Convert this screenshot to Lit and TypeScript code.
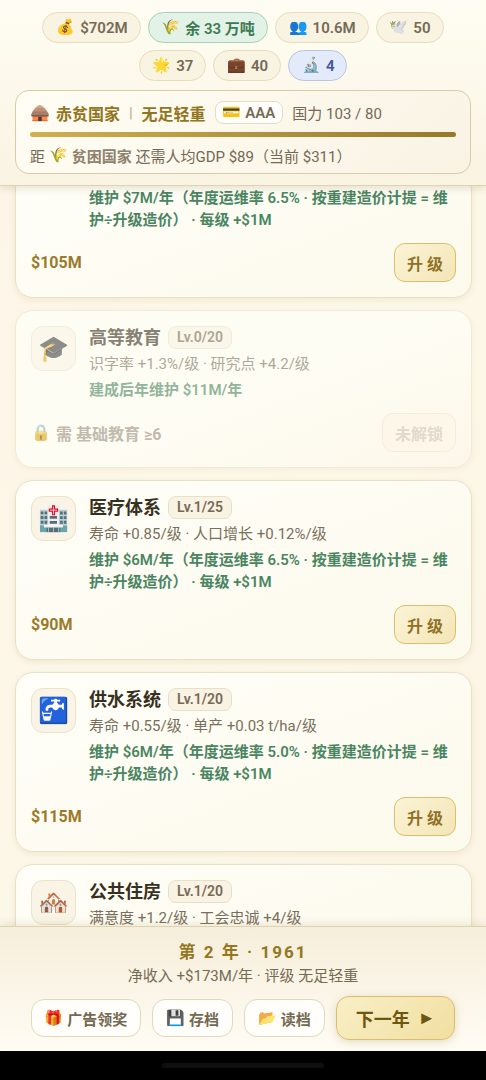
import { LitElement, html, css, nothing } from "lit";
import { customElement, property } from "lit/decorators.js";

interface Project {
  icon?: string;
  name?: string;
  level?: string;
  effect?: string;
  upkeep: string;
  cost?: string;
  need?: string;
}

const STATS = [
  { icon: "💰", text: "$702M", tone: "" },
  { icon: "🌾", text: "余 33 万吨", tone: "green" },
  { icon: "👥", text: "10.6M", tone: "" },
  { icon: "🕊️", text: "50", tone: "" },
  { icon: "🌟", text: "37", tone: "" },
  { icon: "💼", text: "40", tone: "" },
  { icon: "🔬", text: "4", tone: "blue" },
];

const PROJECTS: Project[] = [
  {
    upkeep: "维护 $7M/年（年度运维率 6.5% · 按重建造价计提 = 维护÷升级造价） · 每级 +$1M",
    cost: "$105M",
  },
  {
    icon: "🎓",
    name: "高等教育",
    level: "Lv.0/20",
    effect: "识字率 +1.3%/级 · 研究点 +4.2/级",
    upkeep: "建成后年维护 $11M/年",
    need: "需 基础教育 ≥6",
  },
  {
    icon: "🏥",
    name: "医疗体系",
    level: "Lv.1/25",
    effect: "寿命 +0.85/级 · 人口增长 +0.12%/级",
    upkeep: "维护 $6M/年（年度运维率 6.5% · 按重建造价计提 = 维护÷升级造价） · 每级 +$1M",
    cost: "$90M",
  },
  {
    icon: "🚰",
    name: "供水系统",
    level: "Lv.1/20",
    effect: "寿命 +0.55/级 · 单产 +0.03 t/ha/级",
    upkeep: "维护 $6M/年（年度运维率 5.0% · 按重建造价计提 = 维护÷升级造价） · 每级 +$1M",
    cost: "$115M",
  },
  {
    icon: "🏘️",
    name: "公共住房",
    level: "Lv.1/20",
    effect: "满意度 +1.2/级 · 工会忠诚 +4/级",
    upkeep: "",
  },
];

@customElement("app-icon")
export class AppIcon extends LitElement {
  @property() name = "";
  static styles = css`
    :host {
      display: inline-block;
      line-height: 1;
      font-family: "Noto Color Emoji", sans-serif;
    }
  `;
  render() {
    return html`${this.name}`;
  }
}

@customElement("project-card")
export class ProjectCard extends LitElement {
  @property({ attribute: false }) project!: Project;

  static styles = css`
    :host {
      display: block;
    }
    .card {
      display: flex;
      flex-direction: column;
      gap: 12px;
      padding: 15px;
      border: 1px solid #e9e0c6;
      border-radius: 18px;
      background: linear-gradient(160deg, #fffef8, #fcfaec);
      box-shadow: 0 2px 6px rgba(150, 120, 50, 0.12);
    }
    .locked {
      background: linear-gradient(160deg, #fefdf4 50%, #fdf7ea);
      border-color: #f1ead6;
      box-shadow: 0 2px 6px rgba(150, 120, 50, 0.07);
    }
    .info {
      display: grid;
      grid-template-columns: 45px 1fr;
      column-gap: 13px;
    }
    .tile {
      display: grid;
      place-items: center;
      box-sizing: border-box;
      width: 45px;
      height: 45px;
      border: 1px solid #ece2cb;
      border-radius: 12px;
      background: #faf4e6;
      font-size: 25px;
    }
    .text {
      grid-column: 2;
      display: flex;
      flex-direction: column;
      gap: 4px;
    }
    .title {
      display: flex;
      align-items: center;
      gap: 7px;
    }
    h2 {
      margin: 0;
      font-size: 18px;
      line-height: 23px;
      font-weight: 700;
      color: #37301f;
    }
    .level {
      box-sizing: border-box;
      height: 23px;
      padding: 0 8px;
      border: 1px solid #e9e0c8;
      border-radius: 8px;
      background: #f9f3e4;
      font-size: 14px;
      line-height: 21px;
      font-weight: 600;
      color: #756a55;
    }
    p {
      margin: 0;
      font-size: 15px;
      line-height: 22px;
      color: #7a6f5c;
    }
    .upkeep {
      color: #4a8562;
      font-weight: 600;
    }
    .foot {
      display: flex;
      align-items: center;
      justify-content: space-between;
      font-size: 16px;
      font-weight: 700;
      color: #9a7b2c;
    }
    button {
      box-sizing: border-box;
      height: 39px;
      padding: 0 12px;
      border: 1px solid #d9bf6c;
      border-radius: 11px;
      background: linear-gradient(135deg, #fbf3d6, #f3e6b6);
      font: inherit;
      color: #8f7128;
    }
    .need {
      display: flex;
      align-items: center;
      gap: 5px;
    }
    .locked .tile,
    .locked h2,
    .locked .level,
    .locked p,
    .locked .need {
      opacity: 0.6;
    }
    .locked .need {
      color: #9a9080;
    }
    .locked button {
      border-color: #f5ecdd;
      background: #fdf7ea;
      color: #e2dacb;
    }
  `;

  render() {
    const p = this.project;
    return html`
      <article class="card ${p.need ? "locked" : ""}">
        <div class="info">
          ${p.icon ? html`<div class="tile"><app-icon name=${p.icon}></app-icon></div>` : nothing}
          <div class="text">
            ${p.name
              ? html`<div class="title"><h2>${p.name}</h2><span class="level">${p.level}</span></div>
                  <p>${p.effect}</p>`
              : nothing}
            ${p.upkeep ? html`<p class="upkeep">${p.upkeep}</p>` : nothing}
          </div>
        </div>
        ${p.need
          ? html`<div class="foot">
              <span class="need"><app-icon name="🔒"></app-icon>${p.need}</span>
              <button disabled>未解锁</button>
            </div>`
          : p.cost
            ? html`<div class="foot"><span>${p.cost}</span><button>升 级</button></div>`
            : nothing}
      </article>
    `;
  }
}

@customElement("app-root")
export class AppRoot extends LitElement {
  static styles = css`
    :host {
      display: flex;
      flex-direction: column;
      height: 100vh;
      overflow: hidden;
      background: linear-gradient(120deg, #fef4e7, #fcf8e8 50%, #fdf4e5);
      font-family: Roboto, "Noto Sans CJK SC", sans-serif;
      color: #756a55;
    }
    header {
      position: relative;
      z-index: 1;
      display: flex;
      flex-direction: column;
      gap: 9px;
      padding: 12px 15px 11px;
      border-bottom: 1px solid #dfd3b4;
      background: linear-gradient(#fffdf3, #f9f3e2);
      box-shadow: 0 2px 8px rgba(130, 105, 45, 0.2);
    }
    .stats {
      display: flex;
      flex-wrap: wrap;
      justify-content: center;
      gap: 7px;
      margin: 0;
      padding: 0;
      list-style: none;
    }
    .stat {
      display: flex;
      align-items: center;
      gap: 5px;
      box-sizing: border-box;
      height: 31px;
      padding: 0 12px 0 13px;
      border: 1px solid #e8dcbd;
      border-radius: 16px;
      background: #f9f3e2;
      font-size: 15px;
      font-weight: 600;
    }
    .green {
      border-color: #a9d0b8;
      background: #e2f2e6;
      color: #3f7a55;
    }
    .blue {
      border-color: #b9c4e0;
      background: #e3eafa;
      color: #3f55a0;
    }
    .rank {
      display: flex;
      flex-direction: column;
      gap: 8px;
      padding: 10px 14px 8px;
      border: 1px solid #d8cca8;
      border-radius: 14px;
      background: linear-gradient(135deg, #fffdf4, #f9f3e4);
      font-size: 15px;
    }
    .line {
      display: flex;
      align-items: center;
      gap: 9px;
      height: 23px;
    }
    .goal {
      gap: 4px;
      height: 20px;
    }
    .goal b {
      color: #8d826d;
    }
    .nation {
      display: flex;
      align-items: center;
      gap: 6px;
      font-size: 16px;
      font-weight: 700;
      color: #927521;
    }
    .bar {
      color: #b5a988;
    }
    .rating {
      display: flex;
      align-items: center;
      gap: 4px;
      box-sizing: border-box;
      height: 23px;
      padding: 0 7px;
      border: 1px solid #e6dcc2;
      border-radius: 8px;
      background: #fffefa;
      font-weight: 600;
    }
    .meter {
      height: 5px;
      border-radius: 3px;
      background: linear-gradient(90deg, #d0b050, #96792c);
    }
    main {
      flex: 1;
      min-height: 0;
      overflow: hidden;
    }
    .list {
      display: flex;
      flex-direction: column;
      gap: 12px;
      margin-top: -15px;
      padding: 0 14px 0 15px;
    }
    footer {
      position: relative;
      z-index: 1;
      padding: 13px 16px 11px;
      border-top: 1px solid #dfd3b0;
      background: linear-gradient(#f6eedb, #fffcf4);
      box-shadow: 0 -2px 8px rgba(130, 105, 45, 0.15);
      text-align: center;
    }
    h1 {
      margin: 0;
      font-size: 17px;
      line-height: 24px;
      font-weight: 700;
      letter-spacing: 2px;
      color: #94771f;
    }
    .sum {
      margin: 0 0 8px;
      font-size: 15px;
      line-height: 24px;
    }
    .actions {
      display: flex;
      justify-content: center;
      align-items: center;
      gap: 11px;
    }
    button {
      display: flex;
      align-items: center;
      justify-content: center;
      gap: 4px;
      box-sizing: border-box;
      height: 38px;
      padding: 0 13px;
      border: 1px solid #e2d8bd;
      border-radius: 13px;
      background: #fffefa;
      font: inherit;
      font-size: 15px;
      font-weight: 600;
      color: #746952;
    }
    .next {
      height: 44px;
      padding: 0 19px;
      gap: 8px;
      border-color: #d6bf70;
      background: linear-gradient(135deg, #f8efc6, #f2dfa0);
      box-shadow: 0 2px 8px rgba(160, 130, 50, 0.25);
      font-size: 18px;
      font-weight: 700;
      color: #6d5512;
    }
    .system {
      display: grid;
      place-items: center;
      height: 29px;
      background: #000;
    }
    .handle {
      width: 33.3%;
      height: 5px;
      border-radius: 3px;
      background: #0f0f0f;
    }
  `;

  render() {
    return html`
      <header>
        <ul class="stats">
          ${STATS.map(
            (s) => html`<li class="stat ${s.tone}"><app-icon name=${s.icon}></app-icon>${s.text}</li>`
          )}
        </ul>
        <section class="rank">
          <div class="line">
            <span class="nation"><app-icon name="🛖"></app-icon>赤贫国家</span>
            <span class="bar">|</span>
            <span class="nation">无足轻重</span>
            <span class="rating"><app-icon name="💳"></app-icon>AAA</span>
            <span>国力 103 / 80</span>
          </div>
          <div class="meter"></div>
          <div class="line goal">
            <span>距</span><app-icon name="🌾"></app-icon>
            <span><b>贫困国家</b> 还需人均GDP $89（当前 $311）</span>
          </div>
        </section>
      </header>
      <main>
        <div class="list">
          ${PROJECTS.map((p) => html`<project-card .project=${p}></project-card>`)}
        </div>
      </main>
      <footer>
        <h1>第 2 年 · 1961</h1>
        <p class="sum">净收入 +$173M/年 · 评级 无足轻重</p>
        <div class="actions">
          <button><app-icon name="🎁"></app-icon>广告领奖</button>
          <button><app-icon name="💾"></app-icon>存档</button>
          <button><app-icon name="📂"></app-icon>读档</button>
          <button class="next">下一年 <span>►</span></button>
        </div>
      </footer>
      <div class="system"><div class="handle"></div></div>
    `;
  }
}
